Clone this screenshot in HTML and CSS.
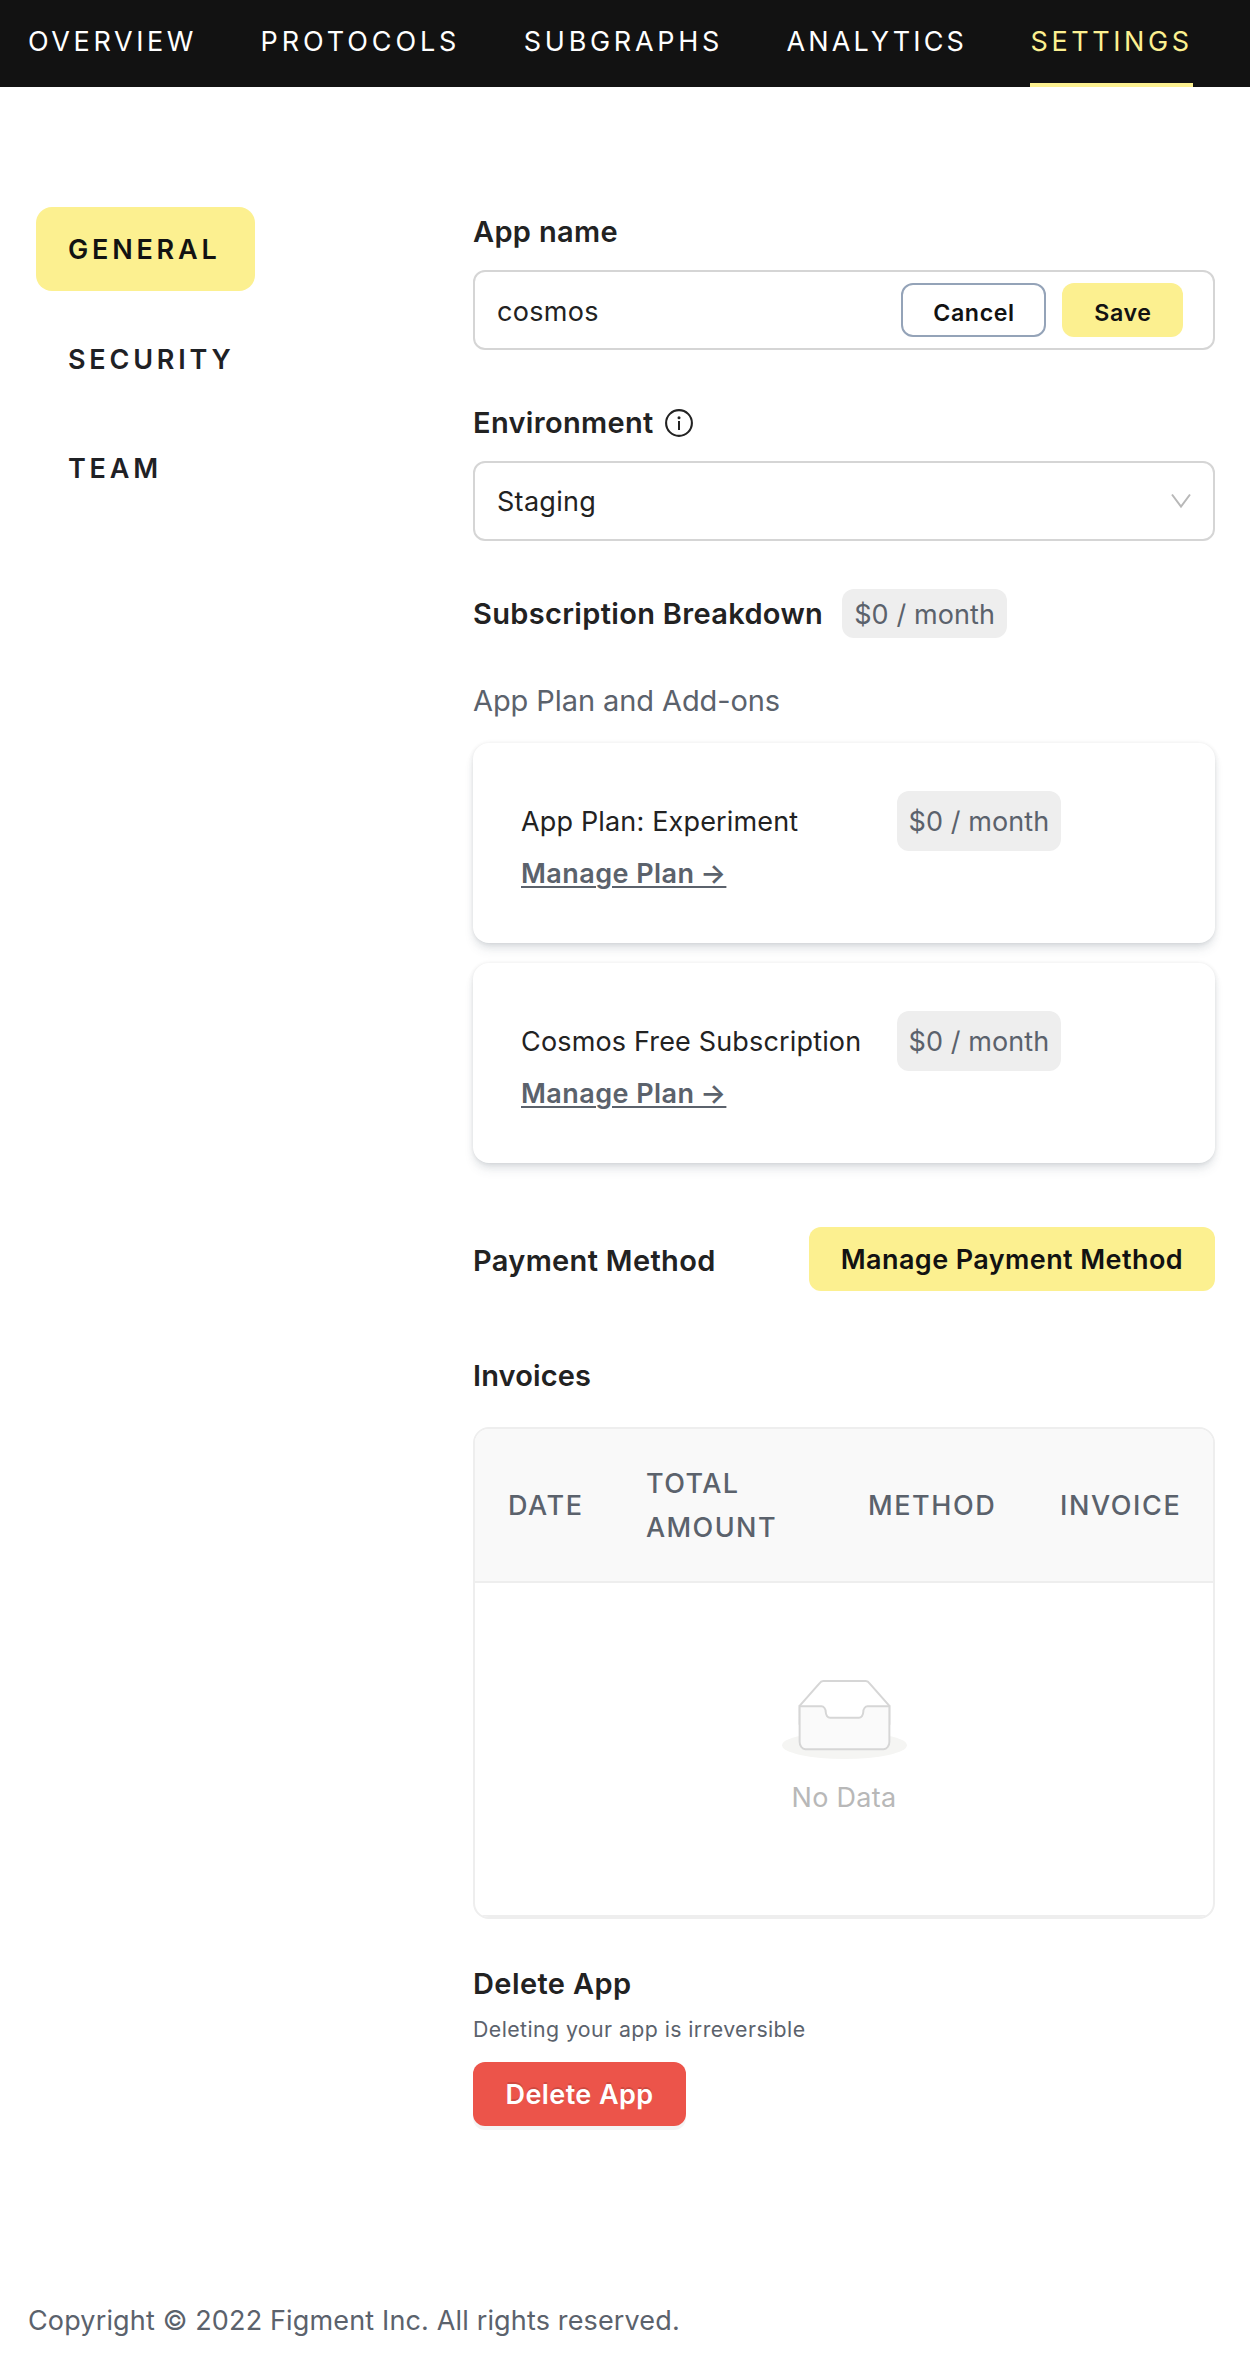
FILE: index.html
```html
<!DOCTYPE html>
<html lang="en">
<head>
<meta charset="utf-8">
<title>Settings</title>
<link rel="stylesheet" href="styles.css">
</head>
<body>
<nav class="nav">
  <a class="nav-item">OVERVIEW</a>
  <a class="nav-item nav-wide">PROTOCOLS</a>
  <a class="nav-item nav-mid">SUBGRAPHS</a>
  <a class="nav-item nav-tight">ANALYTICS</a>
  <a class="nav-item nav-active">SETTINGS</a>
</nav>
<div class="page">
  <aside class="side">
    <a class="side-item side-active">GENERAL</a>
    <a class="side-item">SECURITY</a>
    <a class="side-item">TEAM</a>
  </aside>
  <main class="main">
    <section class="field">
      <h2 class="title">App name</h2>
      <div class="box">
        <span class="value value-input">cosmos</span>
        <button class="small-btn cancel">Cancel</button>
        <button class="small-btn save">Save</button>
      </div>
    </section>
    <section class="field">
      <h2 class="title">Environment
        <svg class="info" viewBox="0 0 28 28"><circle cx="14" cy="14" r="12.9" fill="none" stroke="#222" stroke-width="2.1"/><rect x="13" y="12" width="2" height="9" fill="#222"/><circle cx="14" cy="8.7" r="1.5" fill="#222"/></svg>
      </h2>
      <div class="box">
        <span class="value">Staging</span>
        <svg class="chevron" viewBox="0 0 20 16"><path d="M1 1.5L10 13.5L19 1.5" fill="none" stroke="#b8b8b8" stroke-width="2"/></svg>
      </div>
    </section>
    <section class="subscription">
      <div class="sub-head">
        <h2 class="title title-sub">Subscription Breakdown</h2>
        <span class="badge">$0 / month</span>
      </div>
      <p class="sub-label">App Plan and Add-ons</p>
      <div class="card">
        <div class="card-row"><span class="plan">App Plan: Experiment</span><span class="badge badge-tall">$0 / month</span></div>
        <a class="link">Manage Plan <span class="arrow">→</span></a>
      </div>
      <div class="card">
        <div class="card-row"><span class="plan">Cosmos Free Subscription</span><span class="badge badge-tall">$0 / month</span></div>
        <a class="link">Manage Plan <span class="arrow">→</span></a>
      </div>
    </section>
    <section class="payment">
      <h2 class="title title-payment">Payment Method</h2>
      <button class="btn">Manage Payment Method</button>
    </section>
    <section class="invoices">
      <h2 class="title title-invoices">Invoices</h2>
      <div class="table">
        <div class="thead">
          <span class="th">DATE</span>
          <span class="th th-total">TOTAL AMOUNT</span>
          <span class="th">METHOD</span>
          <span class="th">INVOICE</span>
        </div>
        <div class="empty">
          <svg class="empty-icon" viewBox="0 0 64 41">
            <g transform="translate(0 1)" fill="none" fill-rule="evenodd">
              <ellipse fill="#f5f5f3" cx="32" cy="33" rx="32" ry="7"/>
              <g fill-rule="nonzero" stroke="#d6d6d6">
                <path d="M55 12.76L44.854 1.258C44.367.474 43.656 0 42.907 0H21.093c-.749 0-1.46.474-1.947 1.257L9 12.761V22h46v-9.24z"/>
                <path d="M41.613 15.931c0-1.605.994-2.93 2.227-2.931H55v18.137C55 33.26 53.68 35 52.05 35h-40.1C10.32 35 9 33.259 9 31.137V13h11.16c1.233 0 2.227 1.323 2.227 2.928v.022c0 1.605 1.005 2.901 2.237 2.901h14.752c1.232 0 2.237-1.308 2.237-2.913v-.007z" fill="#fafafa"/>
              </g>
            </g>
          </svg>
          <p class="empty-text">No Data</p>
        </div>
      </div>
    </section>
    <section class="delete">
      <h2 class="title title-delete">Delete App</h2>
      <p class="note">Deleting your app is irreversible</p>
      <button class="btn btn-danger">Delete App</button>
    </section>
  </main>
</div>
<footer class="footer">Copyright © 2022 Figment Inc. All rights reserved.</footer>
</body>
</html>
```
FILE: styles.css
```css
* { box-sizing: border-box; }
body {
  margin: 0;
  background: #fff;
  color: #222;
  font: 400 27px/44px Inter, "Liberation Sans", sans-serif;
}
h2, p { margin: 0; font-weight: 400; }
button { font: inherit; border: 0; margin: 0; padding: 0; }
svg { display: block; flex: none; }

.nav {
  display: flex;
  gap: 63.5px;
  height: 87px;
  padding-left: 28px;
  background: #121212;
}
.nav-item {
  height: 87px;
  padding-top: 20px;
  border-bottom: 4px solid transparent;
  color: #fff;
  letter-spacing: 3.6px;
}
.nav-wide { letter-spacing: 3.9px; }
.nav-mid { letter-spacing: 3.7px; }
.nav-tight { letter-spacing: 3.1px; }
.nav-active { color: #fcf090; border-color: #fcf090; }

.page { display: flex; padding: 120px 35px 0 36px; }
.side {
  display: flex;
  flex-direction: column;
  align-items: flex-start;
  gap: 25.5px;
  width: 437px;
}
.side-item {
  padding: 1px 32px 0;
  border-radius: 16px;
  color: #1f2125;
  font-weight: 600;
  line-height: 83px;
  letter-spacing: 3.8px;
}
.side-active { width: 219px; background: #fcf090; color: #121212; }

.main { width: 742px; padding-top: 2px; }
.field + .field { margin-top: 50px; }
.title {
  display: flex;
  align-items: center;
  gap: 11px;
  margin-bottom: 16px;
  font-size: 29px;
  font-weight: 600;
  line-height: 45px;
  letter-spacing: .33px;
}
.info { width: 28px; height: 28px; }
.box {
  display: flex;
  align-items: center;
  height: 80px;
  padding: 0 30px 0 22px;
  border: 2px solid #d5d5d5;
  border-radius: 12px;
}
.value { flex: 1; padding-top: 1px; line-height: 45px; letter-spacing: .3px; }
.value-input { padding-top: 3px; }
.chevron { width: 20px; height: 16px; margin-right: -8px; }
.small-btn {
  height: 54px;
  padding: 6px 0 0 1px;
  border-radius: 12px;
  color: #121212;
  font-size: 23.2px;
  font-weight: 600;
  line-height: 45px;
  letter-spacing: .6px;
}
.cancel { width: 145px; border: 2px solid #94a3b8; background: #fff; }
.save { width: 121px; margin-left: 16px; background: #fcf090; }

.subscription { margin-top: 48px; }
.sub-head { display: flex; align-items: center; gap: 19px; height: 49px; }
.title-sub { margin: 0; }
.badge {
  height: 49px;
  padding: 0 12px;
  border-radius: 12px;
  background: #eee;
  color: #5b626c;
  line-height: 51px;
  letter-spacing: .1px;
}
.badge-tall { height: 60px; padding: 0 11.5px; line-height: 61px; }
.sub-label {
  margin: 41px 0 20px;
  color: #5b626c;
  font-size: 29px;
  letter-spacing: -.09px;
}
.card {
  height: 200px;
  padding: 48px;
  border-radius: 16px;
  background: #fff;
  box-shadow: 0 8px 12px -2px rgba(51, 65, 85, .1), 0 4px 8px -2px rgba(51, 65, 85, .12), 0 0 4px rgba(0, 0, 0, .08);
}
.card + .card { margin-top: 20px; }
.card-row { display: flex; align-items: center; height: 60px; }
.plan { width: 376px; padding-top: 1px; line-height: 45px; letter-spacing: .16px; }
.link {
  display: block;
  width: max-content;
  padding-top: 1px;
  color: #5b626c;
  font-weight: 600;
  letter-spacing: .44px;
  text-decoration: underline;
  text-decoration-thickness: 2px;
  text-underline-offset: 3px;
}
.arrow { margin-left: -1.5px; }

.payment { display: flex; justify-content: space-between; align-items: center; margin-top: 64px; }
.title-payment { margin: 0; padding-top: 2px; }
.btn {
  height: 64px;
  padding: 2px 32px 0;
  border-radius: 12px;
  background: #fcf090;
  color: #121212;
  font-weight: 600;
  letter-spacing: .41px;
}
.title-invoices { margin: 62px 0 29px; letter-spacing: .13px; }
.table {
  overflow: hidden;
  border: 2px solid #eee;
  border-radius: 16px;
}
.thead {
  display: grid;
  grid-template-columns: 138px 222px 192px 186px;
  align-items: center;
  padding: 33px 0 31px;
  border-bottom: 2px solid #eee;
  background: #f9f9f9;
}
.th {
  padding-left: 33px;
  color: #5b626c;
  font-weight: 500;
  letter-spacing: 1.6px;
}
.th-total { padding-right: 32px; letter-spacing: 1.4px; }
.empty {
  display: flex;
  flex-direction: column;
  align-items: center;
  padding: 96px 0 95px;
  border-bottom: 2px solid #eee;
}
.empty-icon { width: 125px; height: 80px; margin-bottom: 17px; }
.empty-text { color: #b8b8b8; letter-spacing: .29px; }

.title-delete { margin: 42px 0 6px; letter-spacing: .4px; }
.note {
  margin-bottom: 16px;
  color: #5b626c;
  font-size: 21.3px;
  line-height: 34px;
  letter-spacing: .42px;
}
.btn-danger {
  display: block;
  width: 213px;
  background: #ec544a;
  color: #fff;
  text-shadow: 0 -2px 0 rgba(0, 0, 0, .12);
  box-shadow: 0 4px 0 rgba(0, 0, 0, .045);
}
.footer {
  padding: 173px 28px 21px;
  color: #5b626c;
  letter-spacing: .15px;
}
```
